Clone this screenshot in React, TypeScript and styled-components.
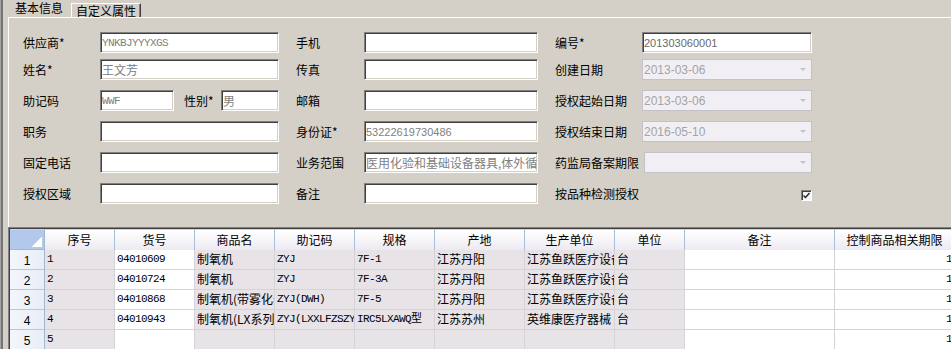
import styled, { createGlobalStyle } from "styled-components";

const GlobalStyle = createGlobalStyle`
  html, body {
    margin: 0;
    padding: 0;
    background: #d4d0c8;
  }
  body {
    font-family: "Noto Sans CJK SC", "Liberation Sans", sans-serif;
    font-size: 12px;
    color: #000;
    overflow: hidden;
  }
`;

const Window = styled.div`
  display: flex;
  flex-direction: column;
  width: 951px;
  height: 349px;
  box-sizing: border-box;
  overflow: hidden;
  background: #d4d0c8;
  border-left: 1px solid #a4a4a4;
  box-shadow: inset 2px 0 0 #747474;
  padding-left: 7px;
`;

const TabBar = styled.div`
  display: flex;
  align-items: flex-end;
  height: 17px;
  flex: none;
`;

const Tab = styled.div<{ $active?: boolean }>`
  box-sizing: border-box;
  white-space: nowrap;
  font-size: 12px;
  ${p => p.$active
    ? `height: 17px; line-height: 15px; padding: 0 8px 0 7px;`
    : `height: 14px; line-height: 14px; padding: 0 4px 0 4px;
       border-top: 1px solid #fff; border-left: 1px solid #fff;
       border-right: 1px solid #404040; box-shadow: inset -1px 0 0 #808080;`}
`;

const Panel = styled.div`
  flex: none;
  height: 210px;
  box-sizing: border-box;
  border-top: 1px solid #fff;
  border-left: 1px solid #fff;
  padding: 14px 0 0 14px;
`;

const Form = styled.div`
  display: grid;
  grid-template-columns: 256px 242px 257px;
  grid-template-rows: 27px 31px 31px 31px 31px 21px;
  column-gap: 17px;
`;

const Field = styled.div`
  display: flex;
  align-items: center;
  height: 21px;
`;

const Label = styled.span<{ $w: number; $ml?: number }>`
  flex: none;
  min-width: ${p => p.$w}px;
  box-sizing: border-box;
  padding-right: 5px;
  margin-left: ${p => p.$ml ?? 0}px;
  white-space: nowrap;
  font-size: 12px;
  line-height: 14px;
`;

const Input = styled.input<{ $font?: "mono" | "sans"; $w?: number }>`
  box-sizing: border-box;
  height: 21px;
  flex: ${p => (p.$w ? `0 0 ${p.$w}px` : "1 1 auto")};
  min-width: 0;
  width: 0;
  margin: 0;
  padding: 0 0 0 1px;
  background: #fff;
  border-style: solid;
  border-width: 1px;
  border-color: #808080 #ffffff #ffffff #808080;
  box-shadow: inset 1px 1px 0 #404040, inset -1px -1px 0 #d4d0c8;
  font-family: ${p =>
    p.$font === "mono"
      ? `"Liberation Mono", monospace`
      : p.$font === "sans"
      ? `"Liberation Sans", sans-serif`
      : `"Noto Sans CJK SC", sans-serif`};
  font-size: ${p => (p.$font ? "11px" : "12px")};
  letter-spacing: ${p => (p.$font === "mono" ? "-0.6px" : "0")};
  color: #808080;
  outline: none;
`;

const Combo = styled.div`
  flex: 1 1 auto;
  height: 21px;
  box-sizing: border-box;
  display: flex;
  align-items: center;
  justify-content: space-between;
  padding: 0 5px 0 1px;
  border: 1px solid #c4c1ca;
  background: #f1eff4;
  color: #a4a4a4;
  font-family: "Liberation Sans", sans-serif;
  font-size: 12px;
`;

const Arrow = styled.span`
  width: 0;
  height: 0;
  border-left: 3px solid transparent;
  border-right: 3px solid transparent;
  border-top: 3px solid #c2c2c2;
`;

const CheckRow = styled(Field)`
  justify-content: space-between;
`;

const CheckBox = styled.span`
  width: 11px;
  height: 11px;
  box-sizing: border-box;
  margin-top: 3px;
  border-style: solid;
  border-width: 1px;
  border-color: #808080 #ffffff #ffffff #808080;
  box-shadow: inset 1px 1px 0 #404040;
  background: #f4f4f4;
  display: flex;
  align-items: center;
  justify-content: center;
`;

const GridFrame = styled.div`
  flex: 1 1 auto;
  min-height: 0;
  overflow: hidden;
  border-top: 1px solid #808080;
  border-left: 1px solid #808080;
  box-shadow: inset 1px 1px 0 #404040;
  padding: 1px 0 0 1px;
`;

const Grid = styled.div`
  display: grid;
  grid-template-columns: 35px 70px 80px 80px 80px 80px 90px 90px 70px 150px 120px;
  grid-template-rows: 21px;
  grid-auto-rows: 20px;
`;

const Corner = styled.div`
  box-sizing: border-box;
  border-top: 1px solid #c6d6ea;
  border-right: 1px solid #9db7d4;
  border-bottom: 1px solid #9db7d4;
  background:
    linear-gradient(to bottom right, transparent 50%, #ffffff 50%) no-repeat right 2px bottom 2px / 10px 10px,
    #b2c9eb;
`;

const HeadCell = styled.div`
  box-sizing: border-box;
  border-top: 1px solid #c6d6ea;
  border-right: 1px solid #a6bedb;
  background: linear-gradient(#ffffff, #eceaf1);
  text-align: center;
  line-height: 19px;
  white-space: nowrap;
  overflow: hidden;
`;

const RowHead = styled.div`
  box-sizing: border-box;
  border-right: 1px solid #9db7d4;
  border-bottom: 1px solid #b4c8de;
  background: linear-gradient(to right, #f3f6fb, #e9eef7);
  text-align: center;
  padding-top: 4px;
  line-height: 14px;
  font-family: "Liberation Sans", sans-serif;
  font-size: 12px;
`;

const Cell = styled.div<{ $white?: boolean; $mono?: boolean; $right?: boolean }>`
  box-sizing: border-box;
  border-right: 1px solid #d6d3d8;
  border-bottom: 1px solid #d6d3d8;
  background: ${p => (p.$white ? "#ffffff" : "#e7e3e7")};
  padding: 2px ${p => (p.$right ? "2px" : "0")} 0 2px;
  text-align: ${p => (p.$right ? "right" : "left")};
  line-height: 14px;
  white-space: nowrap;
  overflow: hidden;
  font-family: ${p =>
    p.$mono ? `"Liberation Mono", "Noto Sans CJK SC", monospace` : `"Noto Sans CJK SC", sans-serif`};
  font-size: ${p => (p.$mono ? "11px" : "12px")};
  letter-spacing: ${p => (p.$mono ? "-0.6px" : "0")};
`;

type Column = { title: string; white?: boolean; mono?: boolean; right?: boolean };

const columns: Column[] = [
  { title: "序号", mono: true },
  { title: "货号", white: true, mono: true },
  { title: "商品名" },
  { title: "助记码", mono: true },
  { title: "规格", mono: true },
  { title: "产地" },
  { title: "生产单位" },
  { title: "单位" },
  { title: "备注", white: true },
  { title: "控制商品相关期限", white: true, mono: true, right: true },
];

const rows: string[][] = [
  ["1", "04010609", "制氧机", "ZYJ", "7F-1", "江苏丹阳", "江苏鱼跃医疗设备有限公司", "台", "", "1"],
  ["2", "04010724", "制氧机", "ZYJ", "7F-3A", "江苏丹阳", "江苏鱼跃医疗设备有限公司", "台", "", "1"],
  ["3", "04010868", "制氧机(带雾化器)", "ZYJ(DWH)", "7F-5", "江苏丹阳", "江苏鱼跃医疗设备有限公司", "台", "", "1"],
  ["4", "04010943", "制氧机(LX系列)", "ZYJ(LXXLFZSZYJ)", "IRC5LXAWQ型", "江苏苏州", "英维康医疗器械", "台", "", "1"],
  ["5", "", "", "", "", "", "", "", "", "1"],
];

function App() {
  return (
    <>
      <GlobalStyle />
      <Window>
        <TabBar>
          <Tab $active>基本信息</Tab>
          <Tab>自定义属性</Tab>
        </TabBar>
        <Panel>
          <Form>
            <Field>
              <Label $w={77}>供应商*</Label>
              <Input readOnly $font="mono" defaultValue="YNKBJYYYXGS" />
            </Field>
            <Field>
              <Label $w={68}>手机</Label>
              <Input readOnly defaultValue="" />
            </Field>
            <Field>
              <Label $w={87}>编号*</Label>
              <Input readOnly $font="sans" defaultValue="201303060001" style={{ color: "#6a6a6a" }} />
            </Field>

            <Field>
              <Label $w={77}>姓名*</Label>
              <Input readOnly defaultValue="王文芳" />
            </Field>
            <Field>
              <Label $w={68}>传真</Label>
              <Input readOnly defaultValue="" />
            </Field>
            <Field>
              <Label $w={87}>创建日期</Label>
              <Combo>2013-03-06<Arrow /></Combo>
            </Field>

            <Field>
              <Label $w={77}>助记码</Label>
              <Input readOnly $font="mono" $w={74} defaultValue="WWF" />
              <Label $w={37} $ml={10}>性别*</Label>
              <Input readOnly defaultValue="男" />
            </Field>
            <Field>
              <Label $w={68}>邮箱</Label>
              <Input readOnly defaultValue="" />
            </Field>
            <Field>
              <Label $w={87}>授权起始日期</Label>
              <Combo>2013-03-06<Arrow /></Combo>
            </Field>

            <Field>
              <Label $w={77}>职务</Label>
              <Input readOnly defaultValue="" />
            </Field>
            <Field>
              <Label $w={68}>身份证*</Label>
              <Input readOnly $font="sans" defaultValue="53222619730486" />
            </Field>
            <Field>
              <Label $w={87}>授权结束日期</Label>
              <Combo>2016-05-10<Arrow /></Combo>
            </Field>

            <Field>
              <Label $w={77}>固定电话</Label>
              <Input readOnly defaultValue="" />
            </Field>
            <Field>
              <Label $w={68}>业务范围</Label>
              <Input readOnly defaultValue="医用化验和基础设备器具,体外循环及血液处理设备" />
            </Field>
            <Field>
              <Label $w={87}>药监局备案期限</Label>
              <Combo><span /><Arrow /></Combo>
            </Field>

            <Field>
              <Label $w={77}>授权区域</Label>
              <Input readOnly defaultValue="" />
            </Field>
            <Field>
              <Label $w={68}>备注</Label>
              <Input readOnly defaultValue="" />
            </Field>
            <CheckRow>
              <Label $w={87}>按品种检测授权</Label>
              <CheckBox>
                <svg width="7" height="7" viewBox="0 0 7 7">
                  <path d="M0.5 3.5 L2.5 5.5 L6.5 1" stroke="#222" strokeWidth="1.4" fill="none" />
                </svg>
              </CheckBox>
            </CheckRow>
          </Form>
        </Panel>
        <GridFrame>
          <Grid>
            <Corner />
            {columns.map(c => (
              <HeadCell key={c.title}>{c.title}</HeadCell>
            ))}
            {rows.map((r, i) => (
              <>
                <RowHead key={`h${i}`}>{i + 1}</RowHead>
                {r.map((v, j) => (
                  <Cell
                    key={`${i}-${j}`}
                    $white={columns[j].white}
                    $mono={columns[j].mono}
                    $right={columns[j].right}
                  >
                    {v}
                  </Cell>
                ))}
              </>
            ))}
          </Grid>
        </GridFrame>
      </Window>
    </>
  );
}

export default App;
